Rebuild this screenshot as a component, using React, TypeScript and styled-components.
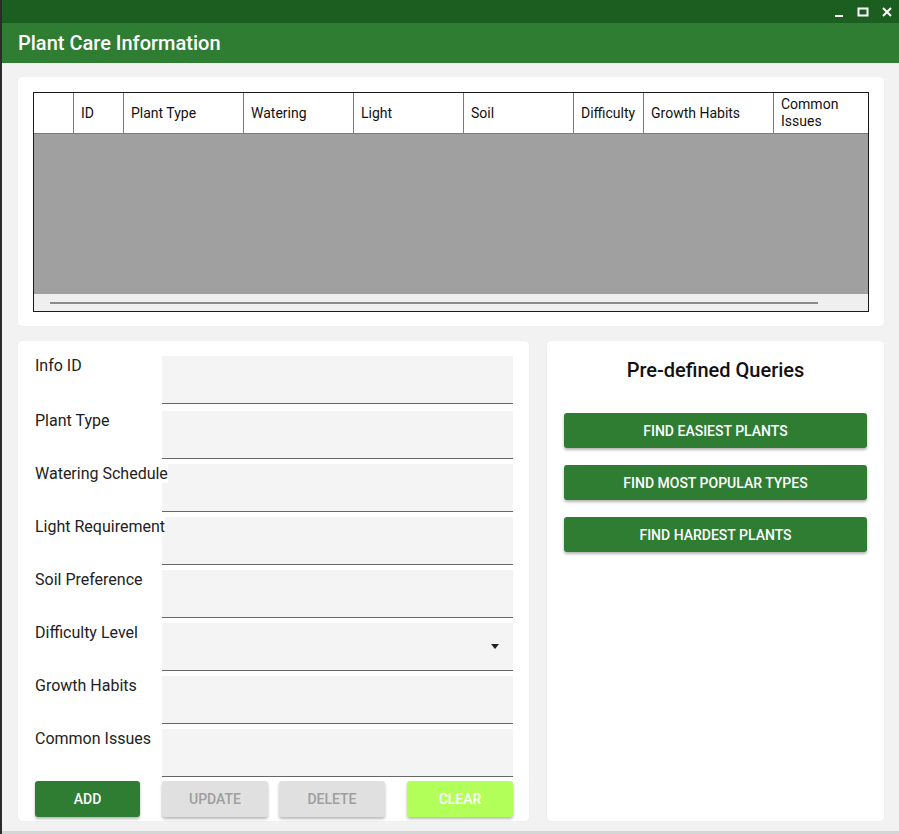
import React from "react";
import styled, { createGlobalStyle } from "styled-components";

const GlobalStyle = createGlobalStyle`
  html, body {
    margin: 0;
    padding: 0;
    background: #2b2b2b;
    font-family: Roboto, "Liberation Sans", Arial, sans-serif;
  }
  * {
    box-sizing: border-box;
  }
`;

const Window = styled.div`
  margin-left: 2px;
  height: 834px;
  display: flex;
  flex-flow: column;
  background-color: #f2f2f2;
  border-bottom: 3px solid #d6d6d6;
  overflow: hidden;
`;

const TitleBar = styled.div`
  height: 23px;
  flex-shrink: 0;
  background-color: #1b5e20;
  display: flex;
  justify-content: flex-end;
  align-items: center;
  gap: 12px;
  padding-right: 6px;
`;

const WinButton = styled.svg`
  width: 12px;
  height: 12px;
  display: block;
`;

const Header = styled.div`
  height: 40px;
  flex-shrink: 0;
  background-color: #2e7d32;
  display: flex;
  align-items: center;
  padding-left: 16px;
  h1 {
    margin: 0;
    color: white;
    font-size: 20px;
    font-weight: 500;
  }
`;

const Content = styled.div`
  flex: 1;
  min-height: 0;
  display: flex;
  flex-flow: column;
  gap: 15px;
  padding: 14px 15px 10px 16px;
`;

const Card = styled.div`
  background-color: white;
  border-radius: 4px;
  box-shadow: 0 0 1px rgba(0, 0, 0, 0.12);
`;

const TableCard = styled(Card)`
  height: 249px;
  flex-shrink: 0;
  padding: 15px 15px 14px 15px;
`;

const Table = styled.div`
  height: 100%;
  border: 1px solid #1a1a1a;
  display: flex;
  flex-flow: column;
  overflow: hidden;
`;

const HeaderRow = styled.div`
  display: flex;
  height: 41px;
  border-bottom: 1px solid #7a7a7a;
  background: white;
  flex-shrink: 0;
`;

const HeaderCell = styled.div<{ $w: number }>`
  width: ${(p) => p.$w}px;
  flex-shrink: 0;
  border-left: 1px solid #7a7a7a;
  display: flex;
  align-items: center;
  padding-left: 7px;
  font-size: 14px;
  line-height: 17px;
  color: #111;
  &:first-child {
    border-left: none;
  }
`;

const TableBody = styled.div`
  flex: 1;
  background-color: #a0a0a0;
`;

const ScrollBar = styled.div`
  height: 17px;
  background-color: #efefef;
  display: flex;
  align-items: center;
  padding-left: 16px;
  flex-shrink: 0;
`;

const ScrollThumb = styled.div`
  width: 768px;
  height: 2px;
  background-color: #8a8a8a;
`;

const BottomRow = styled.div`
  flex: 1;
  min-height: 0;
  display: grid;
  grid-template-columns: 511px 1fr;
  gap: 18px;
`;

const FormCard = styled(Card)`
  padding: 15px 16px 4px 17px;
  display: flex;
  flex-flow: column;
`;

const FieldList = styled.div`
  display: flex;
  flex-flow: column;
  gap: 5px;
`;

const FieldRow = styled.div`
  display: grid;
  grid-template-columns: 127px 1fr;
  height: 48px;
  &:first-child {
    margin-bottom: 2px;
  }
`;

const Label = styled.label`
  position: relative;
  z-index: 1;
  align-self: start;
  justify-self: start;
  white-space: nowrap;
  background: white;
  font-size: 16px;
  line-height: 19px;
  color: #222;
`;

const Field = styled.div`
  background-color: #f4f4f4;
  border-bottom: 1px solid #666;
  display: flex;
  align-items: center;
  justify-content: flex-end;
  padding-right: 14px;
`;

const Arrow = styled.div`
  width: 0;
  height: 0;
  border-left: 4px solid transparent;
  border-right: 4px solid transparent;
  border-top: 5px solid #222;
`;

const ButtonRow = styled.div`
  display: flex;
  margin-top: 4px;
`;

const Button = styled.button<{ $kind: "green" | "gray" | "lime" }>`
  height: 36px;
  width: ${(p) => (p.$kind === "green" ? 105 : 106)}px;
  border: none;
  border-radius: 3px;
  font-family: Roboto, "Liberation Sans", Arial, sans-serif;
  font-size: 14px;
  font-weight: 500;
  background-color: ${(p) =>
    p.$kind === "green" ? "#2e7d32" : p.$kind === "lime" ? "#b2ff59" : "#e0e0e0"};
  color: ${(p) => (p.$kind === "gray" ? "#9e9e9e" : "white")};
  box-shadow: 0 2px 3px rgba(0, 0, 0, 0.28);
  &.add {
    margin-right: 22px;
  }
  &.update {
    margin-right: 11px;
  }
  &.clear {
    margin-left: auto;
  }
`;

const QueryCard = styled(Card)`
  padding: 17px 17px;
  display: flex;
  flex-flow: column;
  h2 {
    margin: 0 0 31px 0;
    text-align: center;
    font-size: 20px;
    font-weight: 500;
    color: #111;
    line-height: 24px;
  }
`;

const QueryList = styled.div`
  display: flex;
  flex-flow: column;
  gap: 17px;
`;

const QueryButton = styled.button`
  height: 35px;
  border: none;
  border-radius: 3px;
  background-color: #2e7d32;
  color: white;
  font-family: Roboto, "Liberation Sans", Arial, sans-serif;
  font-size: 14px;
  font-weight: 500;
  box-shadow: 0 2px 3px rgba(0, 0, 0, 0.3);
`;

const columns = [
  { label: "", w: 39 },
  { label: "ID", w: 50 },
  { label: "Plant Type", w: 120 },
  { label: "Watering", w: 110 },
  { label: "Light", w: 110 },
  { label: "Soil", w: 110 },
  { label: "Difficulty", w: 70 },
  { label: "Growth Habits", w: 130 },
  { label: "Common Issues", w: 100 },
];

const fields = [
  { label: "Info ID" },
  { label: "Plant Type" },
  { label: "Watering Schedule" },
  { label: "Light Requirement" },
  { label: "Soil Preference" },
  { label: "Difficulty Level", select: true },
  { label: "Growth Habits" },
  { label: "Common Issues" },
];

const queries = ["FIND EASIEST PLANTS", "FIND MOST POPULAR TYPES", "FIND HARDEST PLANTS"];

const App = () => {
  return (
    <>
      <GlobalStyle />
      <Window>
        <TitleBar>
          <WinButton viewBox="0 0 12 12">
            <rect x="2" y="9" width="8" height="2" fill="white" />
          </WinButton>
          <WinButton viewBox="0 0 12 12">
            <rect x="1.5" y="2.5" width="9" height="7" fill="none" stroke="white" strokeWidth="2" />
          </WinButton>
          <WinButton viewBox="0 0 12 12">
            <path d="M2 2 L10 10 M10 2 L2 10" stroke="white" strokeWidth="2" />
          </WinButton>
        </TitleBar>
        <Header>
          <h1>Plant Care Information</h1>
        </Header>
        <Content>
          <TableCard>
            <Table>
              <HeaderRow>
                {columns.map((c, i) => (
                  <HeaderCell key={i} $w={c.w}>
                    {c.label}
                  </HeaderCell>
                ))}
              </HeaderRow>
              <TableBody />
              <ScrollBar>
                <ScrollThumb />
              </ScrollBar>
            </Table>
          </TableCard>
          <BottomRow>
            <FormCard>
              <FieldList>
                {fields.map((f) => (
                  <FieldRow key={f.label}>
                    <Label>{f.label}</Label>
                    <Field>{f.select ? <Arrow /> : null}</Field>
                  </FieldRow>
                ))}
              </FieldList>
              <ButtonRow>
                <Button $kind="green" className="add">ADD</Button>
                <Button $kind="gray" className="update">UPDATE</Button>
                <Button $kind="gray">DELETE</Button>
                <Button $kind="lime" className="clear">CLEAR</Button>
              </ButtonRow>
            </FormCard>
            <QueryCard>
              <h2>Pre-defined Queries</h2>
              <QueryList>
                {queries.map((q) => (
                  <QueryButton key={q}>{q}</QueryButton>
                ))}
              </QueryList>
            </QueryCard>
          </BottomRow>
        </Content>
      </Window>
    </>
  );
};

export default App;
